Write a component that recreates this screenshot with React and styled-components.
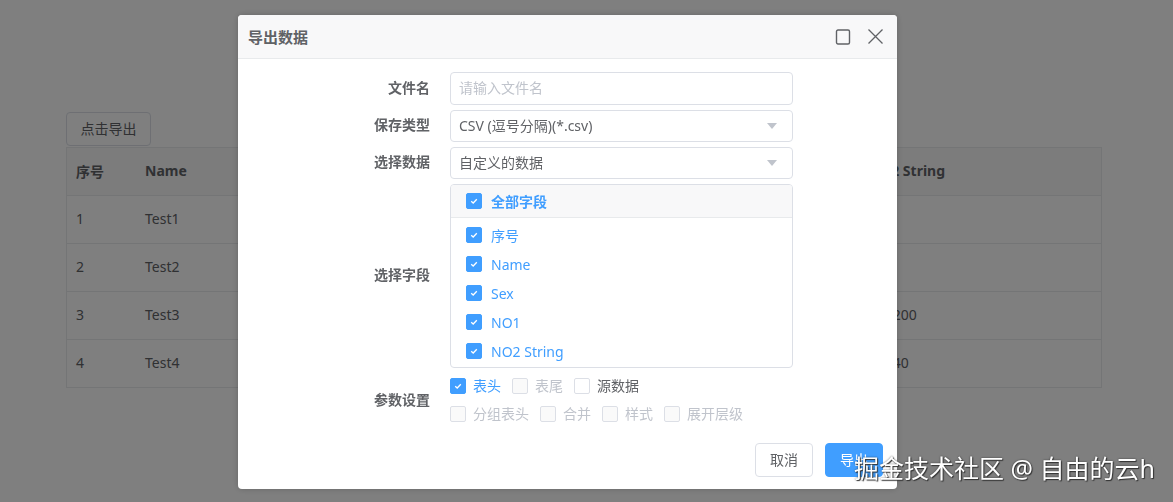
import React from "react";
import styled, { createGlobalStyle } from "styled-components";

const GlobalStyle = createGlobalStyle`
  html, body {
    margin: 0;
    padding: 0;
    background: #fff;
    font-family: "Noto Sans", "Noto Sans CJK SC", sans-serif;
    font-size: 14px;
    color: #606266;
  }
  * { box-sizing: border-box; }
`;

const columns = ["序号", "Name", "Sex", "NO1", "NO2 String"];
const rows = [
  ["1", "Test1", "男", "28", ""],
  ["2", "Test2", "女", "22", ""],
  ["3", "Test3", "男", "32", "100200"],
  ["4", "Test4", "女", "24", "10040"],
];
const fields = ["序号", "Name", "Sex", "NO1", "NO2 String"];

const Check = ({ checked, disabled }) => (
  <CheckBox checked={checked} disabled={disabled}>
    {checked && (
      <svg width="10" height="10" viewBox="0 0 10 10">
        <path d="M2.2 5.2 L4.2 7 L7.8 3.2" fill="none" stroke="#fff" strokeWidth="1.3" />
      </svg>
    )}
  </CheckBox>
);

const App = () => {
  return (
    <>
      <GlobalStyle />
      <Page>
        <PlainButton>点击导出</PlainButton>
        <Table>
          <Row header>
            {columns.map((c) => (
              <Cell key={c} header>
                {c}
              </Cell>
            ))}
          </Row>
          {rows.map((r, i) => (
            <Row key={i}>
              {r.map((v, j) => (
                <Cell key={j}>{v}</Cell>
              ))}
            </Row>
          ))}
        </Table>
      </Page>

      <Overlay>
        <Modal>
          <ModalHeader>
            <Title>导出数据</Title>
            <HeaderIcons>
              <svg width="16" height="16" viewBox="0 0 16 16">
                <rect x="1.5" y="1" width="13" height="14" rx="1.5" fill="none" stroke="#606266" strokeWidth="1.4" />
              </svg>
              <svg width="17" height="17" viewBox="0 0 17 17">
                <path d="M1.5 1.5 L15.5 15.5 M15.5 1.5 L1.5 15.5" stroke="#606266" strokeWidth="1.3" />
              </svg>
            </HeaderIcons>
          </ModalHeader>

          <ModalBody>
            <Form>
              <Label>文件名</Label>
              <Input placeholder="请输入文件名" />

              <Label>保存类型</Label>
              <Select>
                CSV (逗号分隔)(*.csv)
                <Caret />
              </Select>

              <Label>选择数据</Label>
              <Select>
                自定义的数据
                <Caret />
              </Select>

              <Label>选择字段</Label>
              <FieldBox>
                <FieldHead>
                  <Check checked />
                  <span>全部字段</span>
                </FieldHead>
                <FieldList>
                  {fields.map((f) => (
                    <FieldItem key={f}>
                      <Check checked />
                      <span>{f}</span>
                    </FieldItem>
                  ))}
                </FieldList>
              </FieldBox>

              <Label>参数设置</Label>
              <Params>
                <ParamRow>
                  <Option tone="active">
                    <Check checked />
                    表头
                  </Option>
                  <Option tone="disabled">
                    <Check disabled />
                    表尾
                  </Option>
                  <Option>
                    <Check />
                    源数据
                  </Option>
                </ParamRow>
                <ParamRow>
                  <Option tone="disabled">
                    <Check disabled />
                    分组表头
                  </Option>
                  <Option tone="disabled">
                    <Check disabled />
                    合并
                  </Option>
                  <Option tone="disabled">
                    <Check disabled />
                    样式
                  </Option>
                  <Option tone="disabled">
                    <Check disabled />
                    展开层级
                  </Option>
                </ParamRow>
              </Params>
            </Form>
          </ModalBody>

          <Footer>
            <FooterButton>取消</FooterButton>
            <FooterButton primary>导出</FooterButton>
          </Footer>
        </Modal>

        <Watermark>掘金技术社区 @ 自由的云h</Watermark>
      </Overlay>
    </>
  );
};

export default App;

const Page = styled.div`
  width: 1173px;
  height: 502px;
  padding: 112px 71px 0 66px;
  display: flex;
  flex-direction: column;
  align-items: flex-start;
`;

const PlainButton = styled.button`
  height: 34px;
  width: 85px;
  margin-bottom: 1px;
  padding: 0 0 2px;
  border: 1px solid #dcdfe6;
  border-radius: 4px;
  background: #fff;
  color: #606266;
  font: inherit;
  font-size: 14px;
`;

const Table = styled.div`
  width: 100%;
  border: 1px solid #e8eaec;
`;

const Row = styled.div`
  display: grid;
  grid-template-columns: 69px 1fr 1fr 1fr 1fr;
  height: ${(p) => (p.header ? "47px" : "48px")};
  background: ${(p) => (p.header ? "#f8f8f9" : "#fff")};
  border-top: ${(p) => (p.header ? "none" : "1px solid #e8eaec")};
`;

const Cell = styled.div`
  display: flex;
  align-items: center;
  padding: 0 9px 2px;
  font-weight: ${(p) => (p.header ? 700 : 400)};
  color: #606266;
`;

const Overlay = styled.div`
  position: fixed;
  inset: 0;
  background: rgba(0, 0, 0, 0.5);
`;

const Modal = styled.div`
  position: absolute;
  left: 238px;
  top: 15px;
  width: 659px;
  height: 474px;
  background: #fff;
  border-radius: 4px;
  box-shadow: 0 0 6px rgba(0, 0, 0, 0.2);
  display: flex;
  flex-direction: column;
  overflow: hidden;
`;

const ModalHeader = styled.div`
  height: 44px;
  flex: none;
  background: #f8f8f9;
  border-bottom: 1px solid #e8eaec;
  display: flex;
  align-items: center;
  justify-content: space-between;
  padding: 0 13px 0 10px;
`;

const Title = styled.div`
  font-size: 15px;
  font-weight: 700;
  color: #606266;
`;

const HeaderIcons = styled.div`
  display: flex;
  align-items: center;
  gap: 16px;
`;

const ModalBody = styled.div`
  padding-top: 13px;
`;

const Form = styled.div`
  display: grid;
  grid-template-columns: 192px 343px;
  column-gap: 20px;
  row-gap: 5px;
  align-items: center;
`;

const Label = styled.div`
  text-align: right;
  font-weight: 700;
  color: #606266;
  padding-bottom: 4px;
`;

const Input = styled.input`
  height: 33px;
  border: 1px solid #dcdfe6;
  border-radius: 4px;
  padding: 0 8px 3px;
  font: inherit;
  font-size: 14px;
  color: #606266;
  outline: none;
  &::placeholder {
    color: #c0c4cc;
  }
`;

const Select = styled.div`
  height: 32px;
  border: 1px solid #dcdfe6;
  border-radius: 4px;
  padding: 0 15px 2px 8px;
  display: flex;
  align-items: center;
  justify-content: space-between;
  color: #606266;
`;

const Caret = styled.span`
  width: 0;
  height: 0;
  margin-top: 2px;
  border-left: 5px solid transparent;
  border-right: 5px solid transparent;
  border-top: 6px solid #c0c4cc;
`;

const FieldBox = styled.div`
  border: 1px solid #dcdfe6;
  border-radius: 4px;
  overflow: hidden;
`;

const FieldHead = styled.div`
  height: 33px;
  background: #f8f8f9;
  border-bottom: 1px solid #e8eaec;
  display: flex;
  align-items: center;
  gap: 9px;
  padding-left: 15px;
  font-weight: 700;
  color: #409eff;
`;

const FieldList = styled.div`
  padding: 3px 0 1px;
`;

const FieldItem = styled.div`
  height: 29px;
  display: flex;
  align-items: center;
  gap: 9px;
  padding-left: 15px;
  color: #409eff;

  span {
    margin-top: -1px;
  }
`;

const CheckBox = styled.span`
  width: 16px;
  height: 16px;
  flex: none;
  border-radius: 2px;
  display: inline-flex;
  align-items: center;
  justify-content: center;
  background: ${(p) => (p.checked ? "#409eff" : p.disabled ? "#fafafa" : "#fff")};
  border: 1px solid ${(p) => (p.checked ? "#409eff" : "#dcdfe6")};
`;

const Params = styled.div`
  display: flex;
  flex-direction: column;
  margin-top: -1px;
`;

const ParamRow = styled.div`
  height: 28px;
  display: flex;
  align-items: center;
  gap: 11px;
`;

const Option = styled.label`
  display: flex;
  align-items: center;
  gap: 7px;
  line-height: 16px;
  color: ${(p) =>
    p.tone === "active" ? "#409eff" : p.tone === "disabled" ? "#c0c4cc" : "#606266"};
`;

const Footer = styled.div`
  margin-top: auto;
  display: flex;
  justify-content: flex-end;
  gap: 12px;
  padding: 0 14px 12px 0;
`;

const FooterButton = styled.button`
  width: 58px;
  height: 34px;
  padding: 0 0 2px;
  border-radius: 4px;
  font: inherit;
  font-size: 14px;
  border: 1px solid ${(p) => (p.primary ? "#409eff" : "#dcdfe6")};
  background: ${(p) => (p.primary ? "#409eff" : "#fff")};
  color: ${(p) => (p.primary ? "#fff" : "#606266")};
`;

const Watermark = styled.div`
  position: absolute;
  right: 18px;
  bottom: 18px;
  font-size: 25px;
  line-height: 32px;
  color: #fff;
  text-shadow: 1px 1px 1px #333, 0 0 2px rgba(0, 0, 0, 0.6);
  white-space: nowrap;
`;
